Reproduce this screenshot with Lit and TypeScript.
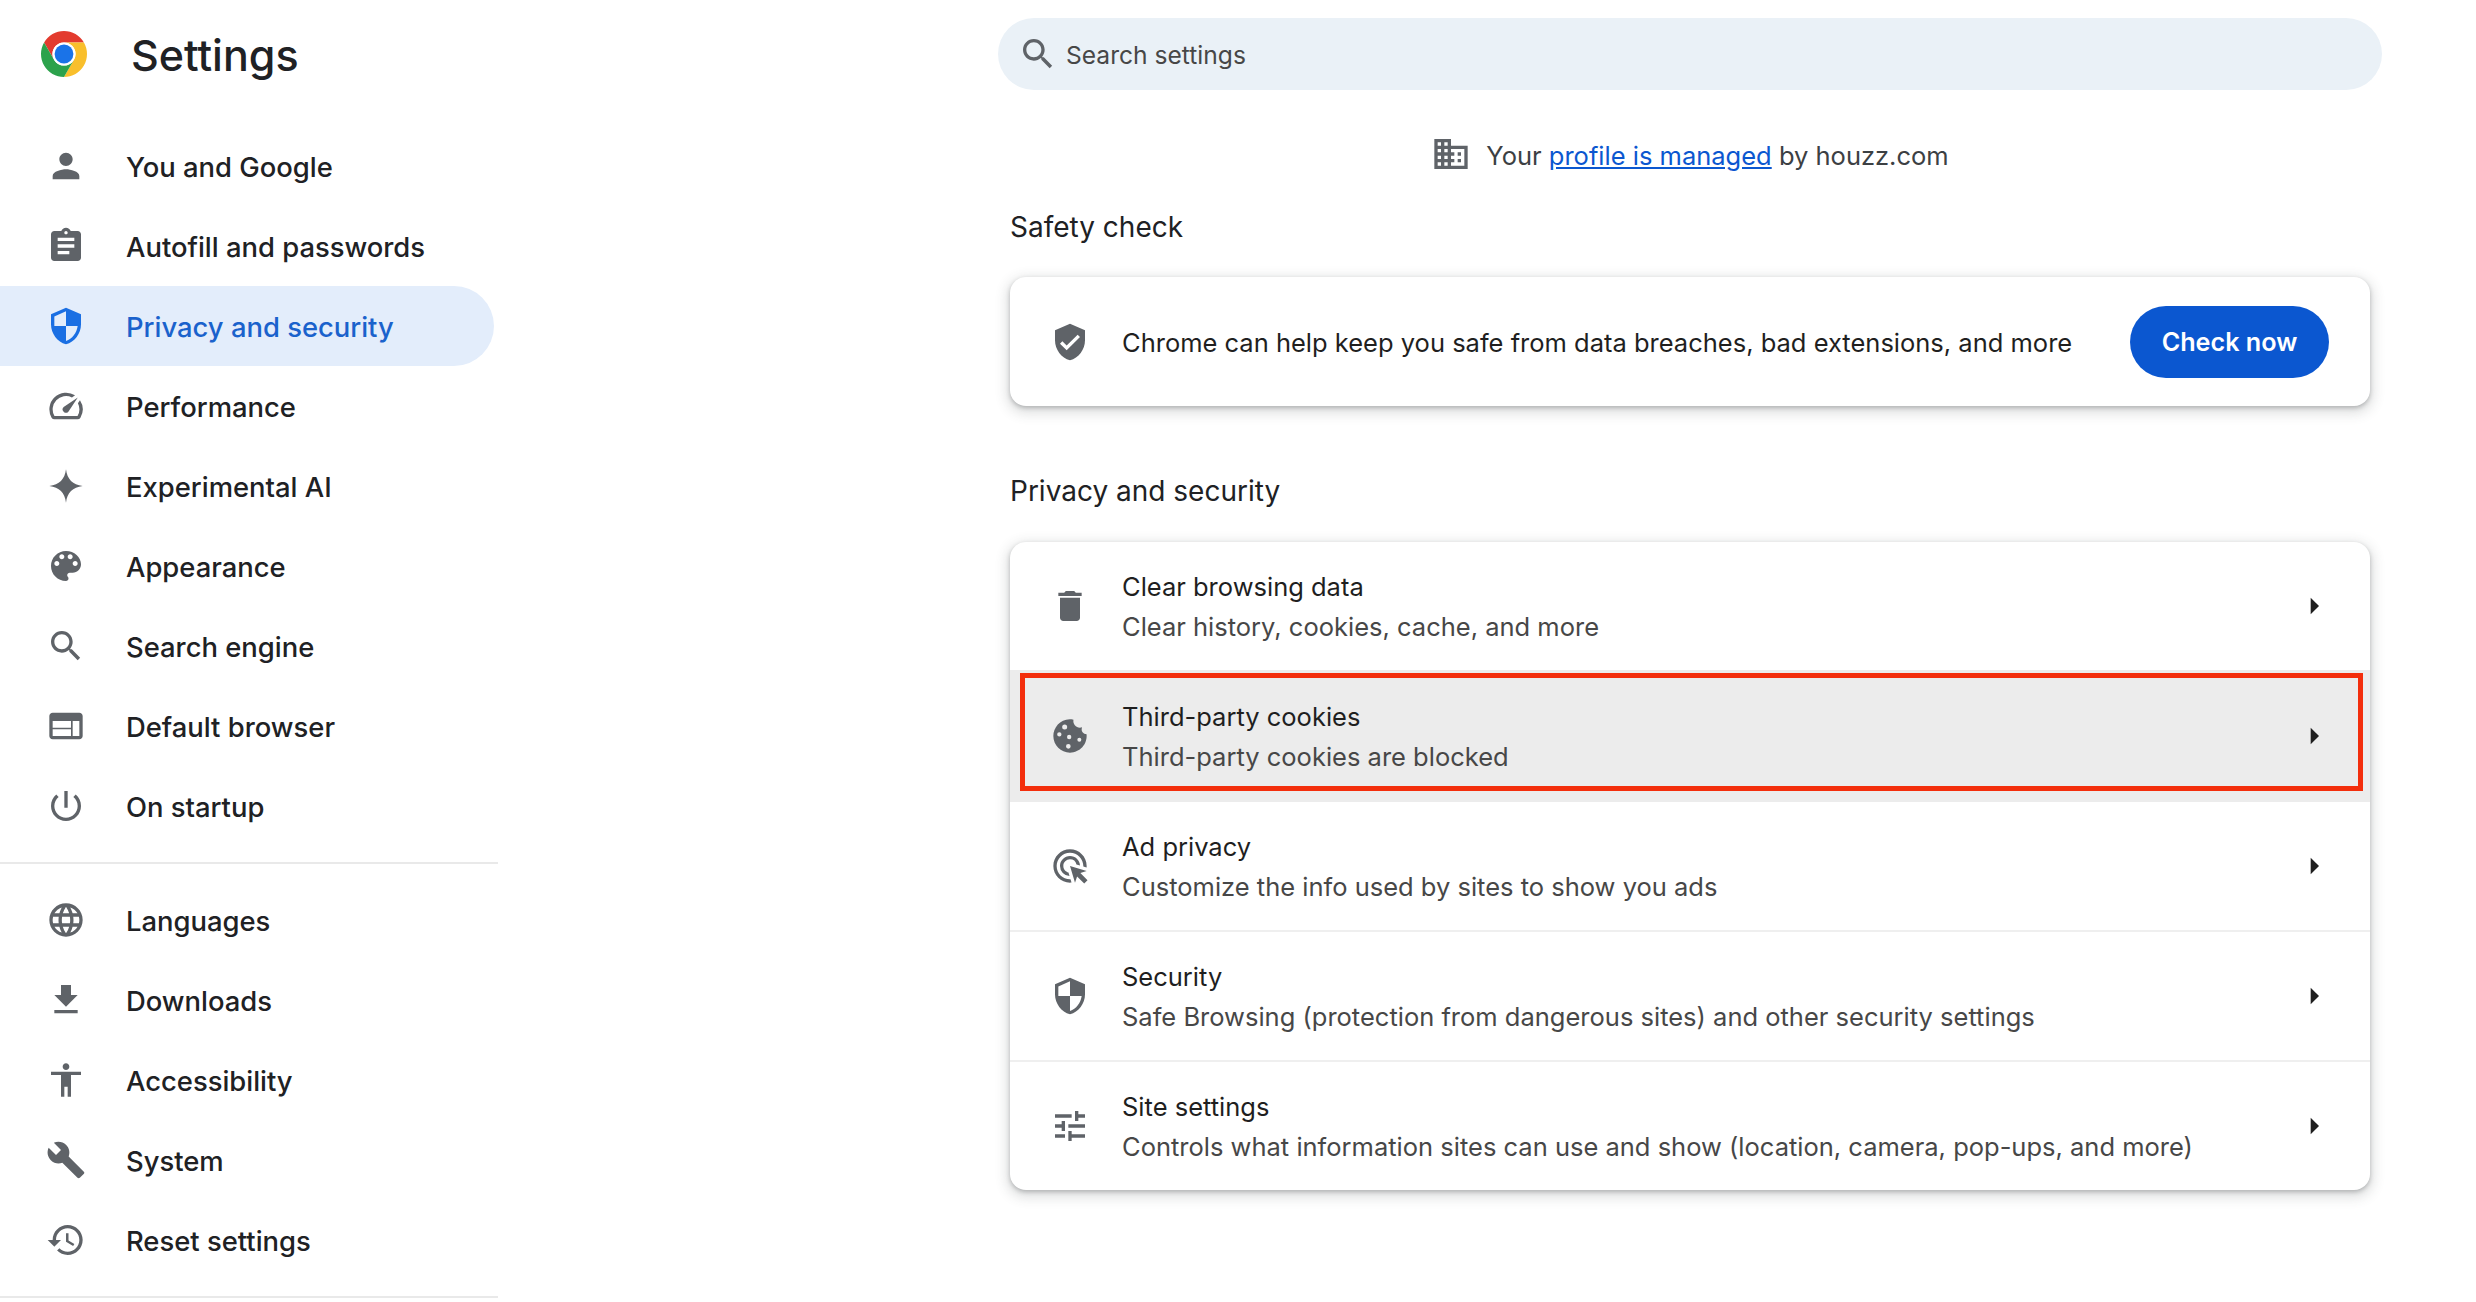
import { LitElement, html, css } from "lit";
import { customElement } from "lit/decorators.js";

const I: Record<string, string> = {
  person: "M12 12c2.21 0 4-1.79 4-4s-1.79-4-4-4-4 1.79-4 4 1.79 4 4 4zm0 2c-2.67 0-8 1.34-8 4v2h16v-2c0-2.66-5.33-4-8-4z",
  assignment: "M19 3h-4.18C14.4 1.84 13.3 1 12 1c-1.3 0-2.4.84-2.82 2H5c-1.1 0-2 .9-2 2v14c0 1.1.9 2 2 2h14c1.1 0 2-.9 2-2V5c0-1.1-.9-2-2-2zm-7 0c.55 0 1 .45 1 1s-.45 1-1 1-1-.45-1-1 .45-1 1-1zm2 14H7v-2h7v2zm3-4H7v-2h10v2zm0-4H7V7h10v2z",
  security: "M12 1L3 5v6c0 5.55 3.84 10.74 9 12 5.16-1.26 9-6.45 9-12V5l-9-4zm0 10.99h7c-.53 4.12-3.28 7.79-7 8.94V12H5V6.3l7-3.11v8.8z",
  speed: "M20.38 8.57l-1.23 1.85a8 8 0 0 1-.22 7.58H5.07A8 8 0 0 1 15.58 6.85l1.85-1.23A10 10 0 0 0 3.35 19a2 2 0 0 0 1.72 1h13.85a2 2 0 0 0 1.74-1 10 10 0 0 0-.27-10.44zm-9.79 6.84a2 2 0 0 0 2.83 0l5.66-8.49-8.49 5.66a2 2 0 0 0 0 2.83z",
  spark: "M12 2C12.7 8 16 11.3 22 12 16 12.7 12.7 16 12 22 11.3 16 8 12.7 2 12 8 11.3 11.3 8 12 2z",
  palette: "M12 3c-4.97 0-9 4.03-9 9s4.03 9 9 9c.83 0 1.5-.67 1.5-1.5 0-.39-.15-.74-.39-1.01-.23-.26-.38-.61-.38-.99 0-.83.67-1.5 1.5-1.5H16c2.76 0 5-2.24 5-5 0-4.42-4.03-8-9-8zm-5.5 9c-.83 0-1.5-.67-1.5-1.5S5.67 9 6.5 9 8 9.67 8 10.5 7.33 12 6.5 12zm3-4C8.67 8 8 7.33 8 6.5S8.67 5 9.5 5s1.5.67 1.5 1.5S10.33 8 9.5 8zm5 0c-.83 0-1.5-.67-1.5-1.5S13.67 5 14.5 5s1.5.67 1.5 1.5S15.33 8 14.5 8zm3 4c-.83 0-1.5-.67-1.5-1.5S16.67 9 17.5 9s1.5.67 1.5 1.5-.67 1.5-1.5 1.5z",
  search: "M15.5 14h-.79l-.28-.27C15.41 12.59 16 11.11 16 9.5 16 5.91 13.09 3 9.5 3S3 5.91 3 9.5 5.91 16 9.5 16c1.61 0 3.09-.59 4.23-1.57l.27.28v.79l5 4.99L20.49 19l-4.99-5zm-6 0C7.01 14 5 11.99 5 9.5S7.01 5 9.5 5 14 7.01 14 9.5 11.99 14 9.5 14z",
  web: "M20 4H4c-1.1 0-2 .9-2 2v12c0 1.1.9 2 2 2h16c1.1 0 2-.9 2-2V6c0-1.1-.9-2-2-2zm-5 14H4v-4h11v4zm0-5H4V9h11v4zm5 5h-4V9h4v9z",
  power: "M13 3h-2v10h2V3zm4.83 2.17l-1.42 1.42C17.99 7.86 19 9.81 19 12c0 3.87-3.13 7-7 7s-7-3.13-7-7c0-2.19 1.01-4.14 2.58-5.42L6.17 5.17C4.23 6.82 3 9.26 3 12c0 4.97 4.03 9 9 9s9-4.03 9-9c0-2.74-1.23-5.18-3.17-6.83z",
  language: "M11.99 2C6.47 2 2 6.48 2 12s4.47 10 9.99 10C17.52 22 22 17.52 22 12S17.52 2 11.99 2zm6.93 6h-2.95c-.32-1.25-.78-2.45-1.38-3.56 1.84.63 3.37 1.91 4.33 3.56zM12 4.04c.83 1.2 1.48 2.53 1.91 3.96h-3.82c.43-1.43 1.08-2.76 1.91-3.96zM4.26 14C4.1 13.36 4 12.69 4 12s.1-1.36.26-2h3.38c-.08.66-.14 1.32-.14 2 0 .68.06 1.34.14 2H4.26zm.82 2h2.95c.32 1.25.78 2.45 1.38 3.56-1.84-.63-3.37-1.9-4.33-3.56zm2.95-8H5.08c.96-1.66 2.49-2.93 4.33-3.56C8.81 5.55 8.35 6.75 8.03 8zM12 19.96c-.83-1.2-1.48-2.53-1.91-3.96h3.82c-.43 1.43-1.08 2.76-1.91 3.96zM14.34 14H9.66c-.09-.66-.16-1.32-.16-2 0-.68.07-1.35.16-2h4.68c.09.65.16 1.32.16 2 0 .68-.07 1.34-.16 2zm.25 5.56c.6-1.11 1.06-2.31 1.38-3.56h2.95c-.96 1.65-2.49 2.93-4.33 3.56zM16.36 14c.08-.66.14-1.32.14-2 0-.68-.06-1.34-.14-2h3.38c.16.64.26 1.31.26 2s-.1 1.36-.26 2h-3.38z",
  download: "M19 9h-4V3H9v6H5l7 7 7-7zM5 18v2h14v-2H5z",
  accessibility: "M12 2c1.1 0 2 .9 2 2s-.9 2-2 2-2-.9-2-2 .9-2 2-2zm9 7h-6v13h-2v-6h-2v6H9V9H3V7h18v2z",
  build: "M22.7 19l-9.1-9.1c.9-2.3.4-5-1.5-6.9-2-2-5-2.4-7.4-1.3L9 6 6 9 1.6 4.7C.4 7.1.9 10.1 2.9 12.1c1.9 1.9 4.6 2.4 6.9 1.5l9.1 9.1c.4.4 1 .4 1.4 0l2.3-2.3c.5-.4.5-1.1.1-1.4z",
  restore: "M13 3c-4.97 0-9 4.03-9 9H1l3.89 3.89.07.14L9 12H6c0-3.87 3.13-7 7-7s7 3.13 7 7-3.13 7-7 7c-1.93 0-3.68-.79-4.94-2.06l-1.42 1.42C8.27 19.99 10.51 21 13 21c4.97 0 9-4.03 9-9s-4.03-9-9-9zm-1 5v5l4.28 2.54.72-1.21-3.5-2.08V8H12z",
  verified: "M12 1L3 5v6c0 5.55 3.84 10.74 9 12 5.16-1.26 9-6.45 9-12V5l-9-4zm-2 16l-4-4 1.41-1.41L10 14.17l6.59-6.59L18 9l-8 8z",
  trash: "M6 19c0 1.1.9 2 2 2h8c1.1 0 2-.9 2-2V7H6v12zM19 4h-3.5l-1-1h-5l-1 1H5v2h14V4z",
  cookie: "M21.95 10.99c-1.79-.03-3.7-1.95-2.68-4.22-2.98 1-5.77-1.59-5.19-4.56C6.95.71 2 6.58 2 12c0 5.52 4.48 10 10 10 5.89 0 10.54-5.08 9.95-11.01zM7.3 6.6a1.5 1.5 0 1 0 3 0a1.5 1.5 0 1 0-3 0zM4.3 11a1.3 1.3 0 1 0 2.6 0a1.3 1.3 0 1 0-2.6 0zM10.2 12.6a1.3 1.3 0 1 0 2.6 0a1.3 1.3 0 1 0-2.6 0zM16.4 14.2a1.2 1.2 0 1 0 2.4 0a1.2 1.2 0 1 0-2.4 0zM9.6 18.2a1.4 1.4 0 1 0 2.8 0a1.4 1.4 0 1 0-2.8 0z",
  ads: "M11.71 17.99A5.993 5.993 0 0 1 6 12c0-3.31 2.69-6 6-6 3.22 0 5.84 2.53 5.99 5.71l-2.1-.63A3.999 3.999 0 0 0 12 8c-2.21 0-4 1.79-4 4 0 1.89 1.31 3.47 3.08 3.89l.63 2.1zM22 12c0 .3-.01.6-.04.9l-1.97-.59c.01-.1.01-.21.01-.31 0-4.42-3.58-8-8-8s-8 3.58-8 8 3.58 8 8 8c.1 0 .21 0 .31-.01l.59 1.97c-.3.03-.6.04-.9.04-5.52 0-10-4.48-10-10S6.48 2 12 2s10 4.48 10 10zm-3.77 4.26L22 15l-10-3 3 10 1.26-3.77 4.27 4.27 1.98-1.98-4.28-4.26z",
  tune: "M3 17v2h6v-2H3zM3 5v2h10V5H3zm10 16v-2h8v-2h-8v-2h-2v6h2zM7 9v2H3v2h4v2h2V9H7zm14 4v-2H11v2h10zm-6-4h2V7h4V5h-4V3h-2v6z",
  arrow: "M10 17l5-5-5-5v10z",
  domain: "M12 7V3H2v18h20V7H12zM6 19H4v-2h2v2zm0-4H4v-2h2v2zm0-4H4V9h2v2zm0-4H4V5h2v2zm4 12H8v-2h2v2zm0-4H8v-2h2v2zm0-4H8V9h2v2zm0-4H8V5h2v2zm10 12h-8v-2h2v-2h-2v-2h2v-2h-2V9h8v10zm-2-8h-2v2h2v-2zm0 4h-2v2h2v-2z",
};

const icon = (name: string) => html`<svg class="icon" viewBox="0 0 24 24"><path fill-rule="evenodd" d=${I[name]}></path></svg>`;

const navA = [
  ["person", "You and Google"],
  ["assignment", "Autofill and passwords"],
  ["security", "Privacy and security"],
  ["speed", "Performance"],
  ["spark", "Experimental AI"],
  ["palette", "Appearance"],
  ["search", "Search engine"],
  ["web", "Default browser"],
  ["power", "On startup"],
];
const navB = [
  ["language", "Languages"],
  ["download", "Downloads"],
  ["accessibility", "Accessibility"],
  ["build", "System"],
  ["restore", "Reset settings"],
];
const rows = [
  ["trash", "Clear browsing data", "Clear history, cookies, cache, and more"],
  ["cookie", "Third-party cookies", "Third-party cookies are blocked"],
  ["ads", "Ad privacy", "Customize the info used by sites to show you ads"],
  ["security", "Security", "Safe Browsing (protection from dangerous sites) and other security settings"],
  ["tune", "Site settings", "Controls what information sites can use and show (location, camera, pop-ups, and more)"],
];

@customElement("app-root")
export class AppRoot extends LitElement {
  static styles = css`
    :host {
      display: flex;
      height: 1302px;
      overflow: hidden;
      background: #fff;
      color: #1f1f1f;
      font-family: Inter, "Liberation Sans", sans-serif;
    }
    .icon { width: 40px; height: 40px; flex: none; fill: #5f6368; display: block; }
    .side { width: 498px; flex: none; }
    .brand { height: 108px; display: flex; align-items: center; padding-left: 41px; gap: 44px; margin-bottom: 18px; }
    .logo { width: 46px; height: 46px; flex: none; display: block; }
    .title { font-size: 43px; font-weight: 500; line-height: 50px; padding-top: 2px; color: #202124; }
    .nav { display: flex; align-items: center; width: 494px; height: 80px; padding-left: 46px; gap: 40px; box-sizing: border-box; font-size: 27.4px; font-weight: 500; color: #202124; }
    .nav span { padding-top: 2px; }
    .nav.on { background: #e3edfb; border-radius: 0 40px 40px 0; color: #1a62cc; }
    .nav.on .icon { fill: #1a6fe3; }
    .sep { height: 2px; background: #e9e9e9; margin: 16px 0; }
    .main { flex: 1; padding-left: 500px; padding-right: 94px; padding-top: 18px; min-width: 0; }
    .search { height: 72px; border-radius: 36px; background: #eaf1f7; display: flex; align-items: center; padding-left: 20px; gap: 8px; font-size: 24.6px; color: #474747; }
    .search span { padding-top: 1px; }
    .managed { display: flex; justify-content: center; align-items: center; height: 40px; margin-top: 44px; gap: 15px; font-size: 25.5px; color: #3c4043; }
    .managed span { padding-top: 2px; }
    .managed a { color: #0b57d0; text-decoration: underline; }
    .content { margin: 0 12px; }
    h2 { margin: 0; font-size: 28px; font-weight: 400; line-height: 40px; color: #202124; }
    .h1 { margin-top: 33px; margin-bottom: 30px; }
    .h2 { margin-top: 65px; margin-bottom: 31px; }
    .card { background: #fff; border-radius: 16px; box-shadow: 0 2px 4px rgba(60,64,67,.3), 0 4px 12px 4px rgba(60,64,67,.15); overflow: hidden; }
    .safety { height: 129px; display: flex; align-items: center; padding: 0 41px 0 40px; gap: 32px; font-size: 25.5px; }
    .safety .text { flex: 1; padding-top: 2px; }
    .btn { width: 199px; height: 72px; border-radius: 36px; background: #0b57d0; color: #fff; display: flex; align-items: center; justify-content: center; font-size: 25.2px; font-weight: 600; }
    .row { position: relative; height: 130px; box-sizing: border-box; border-top: 2px solid #efefef; display: flex; align-items: center; padding: 0 36px 0 40px; gap: 32px; }
    .row:first-child { height: 128px; border-top: none; }
    .row.hover { background: #ececec; border-top-color: #ececec; }
    .row.hover + .row { border-top-color: #ececec; }
    .body { flex: 1; display: flex; flex-direction: column; padding-top: 2px; }
    .t { font-size: 25.5px; line-height: 40px; color: #1f1f1f; }
    .s { font-size: 25.5px; line-height: 40px; color: #474747; }
    .arrow { fill: #1f1f1f; }
    .mark { position: absolute; left: 10px; right: 7px; top: 1px; height: 118px; box-sizing: border-box; border: 5px solid #f32e0c; }
  `;

  private nav(n: string[]) {
    return html`<div class="nav ${n[1] === "Privacy and security" ? "on" : ""}">${icon(n[0])}<span>${n[1]}</span></div>`;
  }

  render() {
    return html`
      <aside class="side">
        <div class="brand">
          <svg class="logo" viewBox="0 0 48 48">
            <path fill="#e33b2e" d="M3.22 12A24 24 0 0 1 44.78 12H24A12 12 0 0 0 13.6 30Z"></path>
            <path fill="#f9bf2c" d="M44.78 12H24A12 12 0 0 1 34.4 30L24 48A24 24 0 0 0 44.78 12Z"></path>
            <path fill="#2ca24c" d="M3.22 12L13.6 30A12 12 0 0 0 34.4 30L24 48A24 24 0 0 1 3.22 12Z"></path>
            <circle cx="24" cy="24" r="12" fill="#fff"></circle>
            <circle cx="24" cy="24" r="9.8" fill="#1a73e8"></circle>
          </svg>
          <span class="title">Settings</span>
        </div>
        ${navA.map((n) => this.nav(n))}
        <div class="sep"></div>
        ${navB.map((n) => this.nav(n))}
        <div class="sep"></div>
      </aside>
      <main class="main">
        <div class="search">${icon("search")}<span>Search settings</span></div>
        <div class="managed">${icon("domain")}<span>Your <a>profile is managed</a> by houzz.com</span></div>
        <div class="content">
          <h2 class="h1">Safety check</h2>
          <div class="card safety">
            ${icon("verified")}
            <span class="text">Chrome can help keep you safe from data breaches, bad extensions, and more</span>
            <div class="btn">Check now</div>
          </div>
          <h2 class="h2">Privacy and security</h2>
          <div class="card">
            ${rows.map((r, i) => html`
              <div class="row ${i === 1 ? "hover" : ""}">
                ${icon(r[0])}
                <div class="body"><span class="t">${r[1]}</span><span class="s">${r[2]}</span></div>
                <svg class="icon arrow" viewBox="0 0 24 24"><path d=${I.arrow}></path></svg>
                ${i === 1 ? html`<div class="mark"></div>` : ""}
              </div>`)}
          </div>
        </div>
      </main>
    `;
  }
}
